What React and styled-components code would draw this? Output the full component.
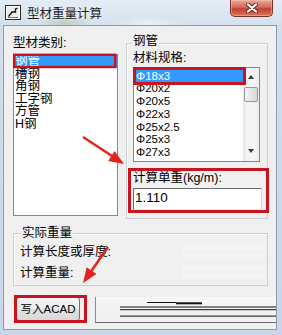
import React from "react";
import styled, { createGlobalStyle } from "styled-components";

const Global = createGlobalStyle`
  html, body { margin: 0; padding: 0; width: 282px; height: 335px; overflow: hidden; background: #c9d7e7; }
  #root { width: 282px; height: 335px; }
  * { box-sizing: border-box; }
`;

const FONT = `"Liberation Sans", "Noto Sans CJK SC", sans-serif`;
const CJK = `"Noto Sans CJK SC", "Liberation Sans", sans-serif`;

const Window = styled.div`
  position: relative;
  width: 282px;
  height: 335px;
  display: flex;
  flex-direction: column;
  background: linear-gradient(180deg, #dde7f2 0px, #d2deeb 25px, #c8d6e7 100%);
  font-family: ${FONT};
  color: #000;
`;

const TitleBar = styled.div`
  height: 25px;
  flex: none;
  display: flex;
  align-items: flex-start;
  padding-left: 5px;
  background:
    radial-gradient(ellipse 26px 9px at 64px 23px, rgba(150, 160, 110, 0.35), rgba(150, 160, 110, 0) 100%),
    radial-gradient(ellipse 40px 8px at 150px 24px, rgba(255, 255, 255, 0.5), rgba(255, 255, 255, 0) 100%),
    linear-gradient(180deg, #e4ecf5 0%, #d4e0ed 100%);
`;

const AppIcon = styled.svg`
  flex: none;
  margin-top: 5px;
`;

const Title = styled.div`
  margin-left: 6px;
  margin-top: 5px;
  font-family: ${CJK};
  font-size: 12.5px;
  line-height: 15px;
  color: #1b1b1b;
  text-shadow: 0 0 5px rgba(255, 255, 255, 0.9);
`;

const CloseButton = styled.div`
  margin-left: auto;
  margin-right: 9px;
  width: 43px;
  height: 17px;
  border: 1px solid #7a3028;
  border-top: none;
  border-radius: 0 0 5px 5px;
  background: linear-gradient(180deg, #e9a899 0%, #d46a58 45%, #c2402f 55%, #d9765c 100%);
  display: flex;
  align-items: center;
  justify-content: center;
  box-shadow: inset 0 0 0 1px rgba(255, 200, 190, 0.45);
`;

const Client = styled.div`
  margin: 0 5px 0 3px;
  height: 305px;
  border: 1px solid #8a9bb2;
  background: #f0f0f0;
  padding-left: 9px;
  display: flex;
  flex-direction: column;
`;

const TopRow = styled.div`
  display: flex;
  align-items: flex-start;
`;

const LeftCol = styled.div`
  width: 105px;
  margin-top: 10px;
  display: flex;
  flex-direction: column;
`;

const Label = styled.div`
  font-family: ${FONT};
  font-size: 12.5px;
  line-height: ${(p) => p.$lh || 15}px;
  margin-top: ${(p) => p.$mt || 0}px;
  white-space: nowrap;
`;

const ListBox = styled.div`
  width: ${(p) => p.$w}px;
  height: ${(p) => p.$h}px;
  margin-top: ${(p) => p.$mt}px;
  border: 1px solid #828790;
  background: #fff;
  display: flex;
  overflow: hidden;
`;

const Items = styled.div`
  flex: 1;
  min-width: 0;
  padding-top: ${(p) => p.$pt || 0}px;
`;

const Item = styled.div`
  height: ${(p) => p.$rh}px;
  line-height: ${(p) => p.$rh}px;
  padding-left: ${(p) => p.$pl}px;
  font-size: ${(p) => p.$fs}px;
  white-space: nowrap;
  background: ${(p) => (p.$sel ? "#3399ff" : "transparent")};
  color: ${(p) => (p.$sel ? "#fff" : "#000")};
`;

const ScrollBar = styled.div`
  width: 16px;
  flex: none;
  display: flex;
  flex-direction: column;
  background: linear-gradient(90deg, #e8e8e8, #f5f5f5 30%, #f5f5f5 70%, #ebebeb);
`;

const ArrowBtn = styled.div`
  height: ${(p) => p.$h}px;
  flex: none;
  display: flex;
  align-items: center;
  justify-content: center;
`;

const Triangle = styled.div`
  width: 0;
  height: 0;
  border-left: 3.5px solid transparent;
  border-right: 3.5px solid transparent;
  ${(p) =>
    p.$down
      ? "border-top: 4px solid #3a3a3a;"
      : "border-bottom: 4px solid #3a3a3a;"}
`;

const Thumb = styled.div`
  margin: 2px 1px 0 1px;
  height: 15px;
  border: 1px solid #979797;
  border-radius: 2px;
  background: linear-gradient(90deg, #f6f6f6, #e6e6e6 50%, #d9d9d9);
`;

const Spacer = styled.div`
  flex: 1;
`;

const GroupBox = styled.fieldset`
  margin: ${(p) => p.$mt}px 0 0 ${(p) => p.$ml}px;
  padding: 0 2px 0 6px;
  width: ${(p) => p.$w}px;
  height: ${(p) => p.$h}px;
  border: 1px solid #c8d0d6;
  box-shadow: inset 1px 1px 0 #fbfbfb;
  min-width: 0;
  display: flex;
  flex-direction: column;
`;

const Legend = styled.legend`
  font-size: 12.5px;
  line-height: 14px;
  padding: ${(p) => p.$pt}px 1px ${(p) => p.$pb}px 1px;
  margin-left: ${(p) => p.$ml}px;
  background: #f0f0f0;
`;

const WeightInput = styled.div`
  margin-top: 2px;
  width: 129px;
  height: 22px;
  background: #fff;
  border: 1px solid;
  border-color: #6a6a6a #d6d6d6 #e2e2e2 #6a6a6a;
  font-size: 13.5px;
  line-height: 18px;
  padding-left: 1px;
`;

const FieldRow = styled.div`
  display: flex;
  justify-content: space-between;
  align-items: center;
  margin-top: ${(p) => p.$mt}px;
`;

const GhostField = styled.div`
  width: 83px;
  height: 15px;
  background: linear-gradient(180deg, #f9f9f9 0%, #f1f1f1 40%, #f6f6f6 70%, #eeeeee 100%);
  opacity: 0.7;
`;

const BottomRow = styled.div`
  display: flex;
  margin-top: 11px;
`;

const Button = styled.div`
  margin-left: 3px;
  width: 69px;
  height: 24px;
  border: 1px solid #707070;
  border-radius: 3px;
  background: linear-gradient(180deg, #f4f4f4 0%, #ececec 50%, #e2e2e2 51%, #d8d8d8 100%);
  font-size: 11.5px;
  line-height: 22px;
  text-align: center;
  white-space: nowrap;
`;

const StatusPanel = styled.div`
  margin-left: 15px;
  width: 181px;
  height: 26px;
  border-left: 1px solid #8a8a8a;
  border-bottom: 1px solid #6a6a6a;
  background: linear-gradient(180deg, #f8f8f4 0%, #f2f2f0 35%, #f0f0f0 100%);
`;

const PanelLines = styled.svg`
  display: block;
`;

const Annotations = styled.svg`
  position: absolute;
  left: 0;
  top: 0;
  pointer-events: none;
`;

const categories = ["钢管", "槽钢", "角钢", "工字钢", "方管", "H钢"];
const specs = ["Φ18x3", "Φ20x2", "Φ20x5", "Φ22x3", "Φ25x2.5", "Φ25x3", "Φ27x3"];

const RED = "#c8141c";
const ARROW = "#e2231c";

export default function App() {
  return (
    <>
      <Global />
      <Window>
        <TitleBar>
          <AppIcon width="16" height="15" viewBox="0 0 16 15">
            <rect x="0.5" y="0.5" width="15" height="14" fill="#ececec" stroke="#2a2a2a" />
            <rect x="1.5" y="1.5" width="13" height="12" fill="none" stroke="#ffffff" strokeWidth="0.8" />
            <polyline points="3.5,11.5 7,7 10.5,7 10.5,3.5" fill="none" stroke="#111" strokeWidth="1.3" />
            <line x1="10.5" y1="3.5" x2="12.5" y2="3.5" stroke="#111" strokeWidth="1.3" />
            <line x1="3" y1="12.5" x2="13" y2="12.5" stroke="#777" strokeWidth="1" />
          </AppIcon>
          <Title>型材重量计算</Title>
          <CloseButton>
            <svg width="12" height="10" viewBox="0 0 12 10">
              <path d="M2 1.5 L10 8.5 M10 1.5 L2 8.5" stroke="#5a2a24" strokeWidth="4" strokeLinecap="round" />
              <path d="M2 1.5 L10 8.5 M10 1.5 L2 8.5" stroke="#ffffff" strokeWidth="2.2" strokeLinecap="round" />
            </svg>
          </CloseButton>
        </TitleBar>

        <Client>
          <TopRow>
            <LeftCol>
              <Label>型材类别:</Label>
              <ListBox $w={105} $h={162} $mt={3}>
                <Items>
                  {categories.map((c, i) => (
                    <Item key={c} $rh={12.5} $pl={1} $fs={12.5} $sel={i === 0}>
                      {c}
                    </Item>
                  ))}
                </Items>
              </ListBox>
            </LeftCol>

            <GroupBox $mt={8} $ml={8} $w={142} $h={185}>
              <Legend $pt={0} $pb={4} $ml={-1}>钢管</Legend>
              <Label $lh={12}>材料规格:</Label>
              <ListBox $w={127} $h={95} $mt={3}>
                <Items $pt={1.5}>
                  {specs.map((s, i) => (
                    <Item key={s} $rh={12.75} $pl={2} $fs={11.5} $sel={i === 0}>
                      {s}
                    </Item>
                  ))}
                </Items>
                <ScrollBar>
                  <ArrowBtn $h={17}>
                    <Triangle />
                  </ArrowBtn>
                  <Thumb />
                  <Spacer />
                  <ArrowBtn $h={20}>
                    <Triangle $down />
                  </ArrowBtn>
                </ScrollBar>
              </ListBox>
              <Label $mt={9}>计算单重(kg/m):</Label>
              <WeightInput>1.110</WeightInput>
            </GroupBox>
          </TopRow>

          <GroupBox $mt={5} $ml={0} $w={255} $h={62}>
            <Legend $pt={2} $pb={2} $ml={1}>实际重量</Legend>
            <FieldRow $mt={3}>
              <Label>计算长度或厚度:</Label>
              <GhostField />
            </FieldRow>
            <FieldRow $mt={6}>
              <Label>计算重量:</Label>
              <GhostField />
            </FieldRow>
          </GroupBox>

          <BottomRow>
            <Button>写入ACAD</Button>
            <StatusPanel>
              <PanelLines width="180" height="25" viewBox="0 0 180 25">
                <rect x="51" y="5" width="29" height="1" fill="#111" />
                <rect x="80" y="5.3" width="26" height="2" fill="#111" />
                <rect x="24" y="9.5" width="156" height="1" fill="#111" />
                <rect x="24" y="12.2" width="156" height="1" fill="#111" />
                <rect x="24" y="18.6" width="156" height="1" fill="#111" />
              </PanelLines>
            </StatusPanel>
          </BottomRow>
        </Client>

        <Annotations width="282" height="335" viewBox="0 0 282 335">
          <rect x="14.2" y="54.8" width="101" height="12.2" fill="none" stroke={RED} strokeWidth="2.4" />
          <rect x="134.5" y="68.5" width="110" height="15" fill="none" stroke={RED} strokeWidth="3" />
          <rect x="129.5" y="169.5" width="138" height="42" fill="none" stroke={RED} strokeWidth="3" />
          <rect x="15.5" y="296.5" width="70" height="25" fill="none" stroke={RED} strokeWidth="3" />

          <line x1="83" y1="137" x2="112" y2="156" stroke={ARROW} strokeWidth="2.5" />
          <polygon points="124,164 108.2,160.9 114.6,150.9" fill={ARROW} />

          <line x1="108" y1="247" x2="91" y2="271.5" stroke={ARROW} strokeWidth="2.5" />
          <polygon points="83,283 86.7,267.3 96.5,274.1" fill={ARROW} />
        </Annotations>
      </Window>
    </>
  );
}
